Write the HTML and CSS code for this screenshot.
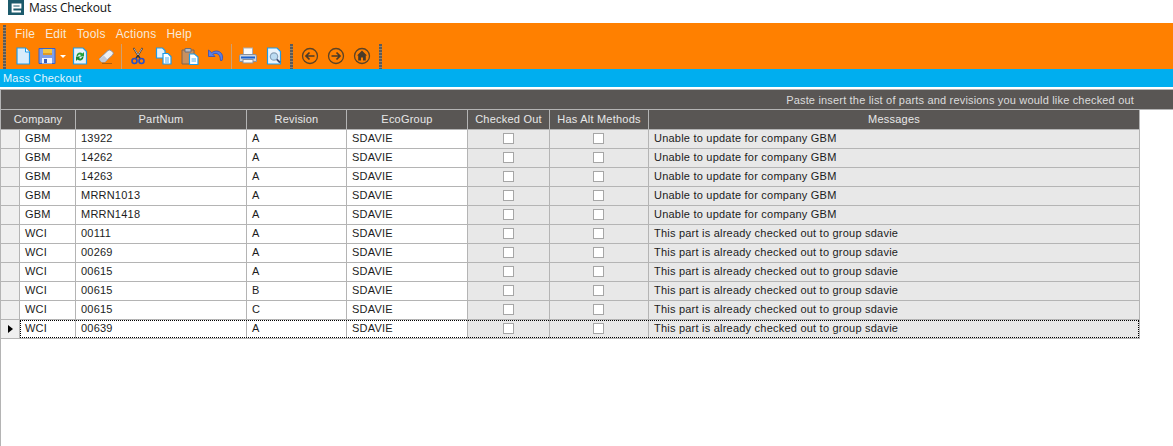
FILE: index.html
```html
<!DOCTYPE html>
<html lang="en">
<head>
<meta charset="utf-8">
<title>Mass Checkout</title>
<link rel="stylesheet" href="styles.css">
</head>
<body>
<header class="titlebar">
  <svg class="logo" viewBox="0 0 16 15" width="16" height="15"><rect width="16" height="15" fill="#1c5a6b"/><path d="M4 7.500h8.500V4.500H4.500V11.500H13" fill="none" stroke="#fff" stroke-width="1.800"/></svg>
  <span class="title">Mass Checkout</span>
</header>

<section class="ribbon">
  <div class="grip grip-tall"></div>
  <div class="ribbon-body">
    <nav class="menu">
      <span>File</span><span>Edit</span><span>Tools</span><span>Actions</span><span>Help</span>
    </nav>
    <div class="toolbar">
      <span class="btn"><svg viewBox="0 0 18 18" width="18" height="18"><path d="M3 1h8.500l4 4v12H3z" fill="#d8ecfb" stroke="#1e9be8" stroke-width="1.200"/><path d="M11.500 1v4h4" fill="#fff" stroke="#1e9be8"/></svg></span>
      <span class="btn btn-save"><svg viewBox="0 0 18 18" width="18" height="18"><path d="M1 1.500h16v15H1z" fill="#7f9fe8" stroke="#3a62c8"/><rect x="5" y="2" width="9" height="6" fill="#f4c63f"/><rect x="5" y="6" width="9" height="2" fill="#e09b28"/><rect x="4" y="11" width="10" height="5.500" fill="#f3f6fc"/><rect x="6" y="12" width="3" height="4" fill="#3a5fb8"/></svg></span>
      <span class="btn-arrow"><i class="caret"></i></span>
      <span class="btn"><svg viewBox="0 0 18 18" width="18" height="18"><path d="M2.500 1h9.500l3.500 3.500v12.500h-13z" fill="#e5f2fb" stroke="#1e9be8" stroke-width="1.200"/><path d="M5.500 9a3.500 3.500 0 0 1 6-2.500L13 5v4.500H8.500l1.500-1.500a1.800 1.800 0 0 0-3 1z" fill="#21a03c"/><path d="M12.500 10a3.500 3.500 0 0 1-6 2.500L5 14V9.500h4.500L8 11a1.800 1.800 0 0 0 3-1z" fill="#168a32"/></svg></span>
      <span class="btn"><svg viewBox="0 0 18 18" width="18" height="18"><path d="M2 12 11 3.500q1.500-1 3 0l2 2q.8 1.300-.5 2.500L8 15H4.500z" fill="#eef1f5" stroke="#8b93a3"/><path d="M2 12l2.500 3H8l2.500-2.500-3.500-3.800z" fill="#c4cad6"/><path d="M5 16.500h10" stroke="#7a4a12" stroke-opacity=".6"/></svg></span>
      <span class="sep"></span>
      <span class="btn"><svg viewBox="0 0 18 18" width="18" height="18"><path d="M4.500 1 11 11.500M13.500 1 7 11.500" stroke="#30323a" stroke-width="1.500" fill="none"/><path d="M5 1.500 9 8M13 1.500 9 8" stroke="#e6e8ee" stroke-width=".7"/><circle cx="5.500" cy="14" r="2.500" fill="none" stroke="#2a4fc4" stroke-width="1.600"/><circle cx="12.500" cy="14" r="2.500" fill="none" stroke="#2a4fc4" stroke-width="1.600"/></svg></span>
      <span class="btn"><svg viewBox="0 0 18 18" width="18" height="18"><path d="M1.500 1h6l2.500 2.500V11H1.500z" fill="#e5f2fb" stroke="#1e9be8" stroke-width="1.200"/><path d="M8 6.500h5l3 3v7.500H8z" fill="#fff" stroke="#1e9be8" stroke-width="1.200"/><path d="M10 11h4M10 13h4M10 15h4" stroke="#1e9be8" stroke-width=".8"/></svg></span>
      <span class="btn"><svg viewBox="0 0 18 18" width="18" height="18"><path d="M1 3h12v14H1z" fill="#c8905f" stroke="#7d6250"/><path d="M4 1.500h6V5H4z" fill="#b9bcc4" stroke="#6c6f78"/><path d="M8.500 7h5l3.500 3v7.500H8.500z" fill="#fff" stroke="#1e9be8" stroke-width="1.200"/><path d="M10.500 12h4.500M10.500 14h4.500" stroke="#1e9be8" stroke-width=".8"/></svg></span>
      <span class="btn"><svg viewBox="0 0 18 18" width="18" height="18"><path d="M1.500 3v6.500H8L5.800 7.300c2.700-1.800 6-.9 7.200 2.700l.5 3.500h1.500c2-5-1-9.500-5.500-9.500-2 0-3.500.7-4.800 1.700z" fill="#5f7fe0" stroke="#2c4fc0" stroke-width=".8"/></svg></span>
      <span class="sep"></span>
      <span class="btn"><svg viewBox="0 0 18 18" width="18" height="18"><rect x="4.500" y="1" width="9" height="7" fill="#fbfbfb" stroke="#a9adb5"/><path d="M2 7.500h14q1.500 0 1.500 1.500v5.500H.5V9q0-1.500 1.500-1.500z" fill="#cfd3da" stroke="#8b919b"/><rect x="2" y="9.500" width="14" height="2" fill="#1b62d0"/><rect x="4" y="12.500" width="10" height="3.500" fill="#f5f5f5" stroke="#8b919b"/></svg></span>
      <span class="btn"><svg viewBox="0 0 18 18" width="18" height="18"><path d="M2.500 1h9.500l3.500 3.500v12.500h-13z" fill="#eaf4fc" stroke="#1e9be8" stroke-width="1.200"/><circle cx="9" cy="9.500" r="3.700" fill="#bcdcf2" stroke="#8aa3ba" stroke-width="1.200"/><path d="M11.800 12.300l3.200 3.200" stroke="#3f4f7a" stroke-width="1.800"/></svg></span>
      <div class="grip grip-a"></div>
      <span class="btn"><svg viewBox="0 0 18 18" width="18" height="18"><circle cx="9" cy="9" r="7.500" fill="none" stroke="#5c4326" stroke-width="1.300"/><path d="M13.500 9h-8M8.500 5.500 5 9l3.500 3.500" fill="none" stroke="#4a3a28" stroke-width="1.700"/></svg></span>
      <span class="btn"><svg viewBox="0 0 18 18" width="18" height="18"><circle cx="9" cy="9" r="7.500" fill="none" stroke="#5c4326" stroke-width="1.300"/><path d="M4.500 9h8M9.500 5.500 13 9l-3.500 3.500" fill="none" stroke="#4a3a28" stroke-width="1.700"/></svg></span>
      <span class="btn"><svg viewBox="0 0 18 18" width="18" height="18"><circle cx="9" cy="9" r="7.500" fill="none" stroke="#5c4326" stroke-width="1.300"/><path d="M9 3.500 14 8.500h-1.200V13.500H10v-3H8v3H5.200V8.500H4z" fill="#4a3a28"/></svg></span>
      <div class="grip grip-b"></div>
    </div>
  </div>
</section>

<div class="formbar">Mass Checkout</div>

<main class="workspace">
  <div class="hint">Paste insert the list of parts and revisions you would like checked out</div>
  <div class="grid">
    <div class="row head">
      <div class="th th-company">Company</div>
      <div class="th">PartNum</div>
      <div class="th">Revision</div>
      <div class="th">EcoGroup</div>
      <div class="th">Checked Out</div>
      <div class="th">Has Alt Methods</div>
      <div class="th">Messages</div>
    </div>
    <div class="row"><div class="rh"></div><div class="cells"><div class="td">GBM</div><div class="td">13922</div><div class="td">A</div><div class="td">SDAVIE</div><div class="td ro"><i class="cb"></i></div><div class="td ro"><i class="cb"></i></div><div class="td ro msg">Unable to update for company GBM</div></div></div>
    <div class="row"><div class="rh"></div><div class="cells"><div class="td">GBM</div><div class="td">14262</div><div class="td">A</div><div class="td">SDAVIE</div><div class="td ro"><i class="cb"></i></div><div class="td ro"><i class="cb"></i></div><div class="td ro msg">Unable to update for company GBM</div></div></div>
    <div class="row"><div class="rh"></div><div class="cells"><div class="td">GBM</div><div class="td">14263</div><div class="td">A</div><div class="td">SDAVIE</div><div class="td ro"><i class="cb"></i></div><div class="td ro"><i class="cb"></i></div><div class="td ro msg">Unable to update for company GBM</div></div></div>
    <div class="row"><div class="rh"></div><div class="cells"><div class="td">GBM</div><div class="td">MRRN1013</div><div class="td">A</div><div class="td">SDAVIE</div><div class="td ro"><i class="cb"></i></div><div class="td ro"><i class="cb"></i></div><div class="td ro msg">Unable to update for company GBM</div></div></div>
    <div class="row"><div class="rh"></div><div class="cells"><div class="td">GBM</div><div class="td">MRRN1418</div><div class="td">A</div><div class="td">SDAVIE</div><div class="td ro"><i class="cb"></i></div><div class="td ro"><i class="cb"></i></div><div class="td ro msg">Unable to update for company GBM</div></div></div>
    <div class="row"><div class="rh"></div><div class="cells"><div class="td">WCI</div><div class="td">00111</div><div class="td">A</div><div class="td">SDAVIE</div><div class="td ro"><i class="cb"></i></div><div class="td ro"><i class="cb"></i></div><div class="td ro msg">This part is already checked out to group sdavie</div></div></div>
    <div class="row"><div class="rh"></div><div class="cells"><div class="td">WCI</div><div class="td">00269</div><div class="td">A</div><div class="td">SDAVIE</div><div class="td ro"><i class="cb"></i></div><div class="td ro"><i class="cb"></i></div><div class="td ro msg">This part is already checked out to group sdavie</div></div></div>
    <div class="row"><div class="rh"></div><div class="cells"><div class="td">WCI</div><div class="td">00615</div><div class="td">A</div><div class="td">SDAVIE</div><div class="td ro"><i class="cb"></i></div><div class="td ro"><i class="cb"></i></div><div class="td ro msg">This part is already checked out to group sdavie</div></div></div>
    <div class="row"><div class="rh"></div><div class="cells"><div class="td">WCI</div><div class="td">00615</div><div class="td">B</div><div class="td">SDAVIE</div><div class="td ro"><i class="cb"></i></div><div class="td ro"><i class="cb"></i></div><div class="td ro msg">This part is already checked out to group sdavie</div></div></div>
    <div class="row"><div class="rh"></div><div class="cells"><div class="td">WCI</div><div class="td">00615</div><div class="td">C</div><div class="td">SDAVIE</div><div class="td ro"><i class="cb"></i></div><div class="td ro"><i class="cb"></i></div><div class="td ro msg">This part is already checked out to group sdavie</div></div></div>
    <div class="row current"><div class="rh"><i class="pointer"></i></div><div class="cells"><div class="td">WCI</div><div class="td">00639</div><div class="td">A</div><div class="td">SDAVIE</div><div class="td ro"><i class="cb"></i></div><div class="td ro"><i class="cb"></i></div><div class="td ro msg">This part is already checked out to group sdavie</div></div></div>
  </div>
</main>
</body>
</html>
```

FILE: styles.css
```css
* { box-sizing: border-box; }

html, body {
  margin: 0;
  height: 100%;
  overflow: hidden;
  background: #fff;
}

body {
  display: flex;
  flex-direction: column;
  font-family: "Liberation Sans", Arial, sans-serif;
  font-size: 11px;
  color: #1c1c1c;
}

.titlebar {
  flex: none;
  height: 23px;
  display: flex;
  align-items: flex-start;
  padding-left: 8px;
  background: #fff;
}

.logo { flex: none; }

.title {
  margin-left: 5px;
  font-family: "Open Sans", "Noto Sans", sans-serif;
  font-size: 12px;
  line-height: 16px;
  letter-spacing: -.2px;
  color: #111;
}

.ribbon {
  flex: none;
  height: 46px;
  display: flex;
  padding-left: 3px;
  background: #ff8000;
}

.grip {
  flex: none;
  width: 3px;
  background: repeating-linear-gradient(to bottom, #5b5b5b 0 2px, #9a8468 2px 3px);
}

.grip-tall { height: 44px; margin-top: 2px; }

.ribbon-body { flex: 1; min-width: 0; }

.menu {
  height: 21px;
  display: flex;
  align-items: center;
  gap: 10px;
  padding-left: 9px;
  font-size: 12px;
  letter-spacing: .2px;
  color: #f7e9da;
}

.toolbar {
  height: 25px;
  display: flex;
  align-items: center;
  padding-left: 4px;
}

.btn {
  flex: none;
  width: 26px;
  height: 20px;
  padding-bottom: 1px;
  display: flex;
  align-items: center;
  justify-content: center;
}

.btn-save { width: 22px; }

.btn-arrow {
  flex: none;
  width: 9px;
  height: 20px;
  display: flex;
  align-items: center;
  justify-content: center;
}

.caret {
  width: 0;
  height: 0;
  border-left: 3px solid transparent;
  border-right: 3px solid transparent;
  border-top: 3px solid #fff;
}

.sep {
  flex: none;
  width: 1px;
  height: 25px;
  margin: 0 3px 0 2px;
  background: #d0a070;
}

.grip-a { height: 25px; margin: 0 4px 0 3px; }
.grip-b { height: 25px; margin-left: 4px; }

.formbar {
  flex: none;
  height: 18px;
  padding-left: 3px;
  background: #00aeef;
  color: #e6f6fd;
  font-size: 11px;
  line-height: 18px;
  letter-spacing: .2px;
}

.workspace {
  flex: 1;
  margin-top: 2px;
  border-left: 1px solid #b4b4b4;
  border-top: 1px solid #b4b4b4;
}

.hint {
  height: 20px;
  padding-right: 39px;
  background: #595654;
  border-bottom: 1px solid #b4b4b4;
  color: #dcdcdc;
  font-size: 11px;
  line-height: 20px;
  letter-spacing: .18px;
  text-align: right;
}

.grid {
  width: 1139px;
}

.row {
  display: flex;
  height: 19px;
}

.head {
  height: 20px;
  background: #595654;
  border-bottom: 1px solid #b4b4b4;
  border-right: 1px solid #b4b4b4;
}

.th {
  flex: none;
  height: 19px;
  border-right: 1px solid #b4b4b4;
  color: #e8e8e8;
  line-height: 19px;
  letter-spacing: .22px;
  text-align: center;
}

.th:last-child { border-right: 0; }

.th-company { width: 75px; }
.th:nth-child(2) { width: 171px; }
.th:nth-child(3) { width: 100px; }
.th:nth-child(4) { width: 121px; }
.th:nth-child(5) { width: 82px; }
.th:nth-child(6) { width: 99px; }
.th:nth-child(7) { width: 490px; }

.rh {
  flex: none;
  width: 19px;
  background: #efefef;
  border-right: 1px solid #b4b4b4;
  border-bottom: 1px solid #b4b4b4;
  display: flex;
  align-items: center;
  padding-left: 7px;
}

.pointer {
  width: 0;
  height: 0;
  border-top: 4.5px solid transparent;
  border-bottom: 4.5px solid transparent;
  border-left: 5px solid #000;
}

.cells {
  flex: none;
  width: 1120px;
  display: grid;
  grid-template-columns: 56px 171px 100px 121px 82px 99px 490px;
  border-right: 1px solid #b4b4b4;
}

.td {
  height: 19px;
  padding-left: 5px;
  background: #fff;
  border-right: 1px solid #b4b4b4;
  border-bottom: 1px solid #b4b4b4;
  line-height: 16px;
  letter-spacing: .22px;
  white-space: nowrap;
  overflow: hidden;
}

.td:last-child { border-right: 0; }

.ro {
  display: flex;
  align-items: center;
  justify-content: center;
  padding: 0 1px 1px 0;
  background: #e8e8e8;
}

.msg {
  display: block;
  padding-left: 5px;
}

.cb {
  width: 11px;
  height: 11px;
  background: #fff;
  border: 1px solid #a6a6a6;
}

.current .cells {
  position: relative;
}

.current .cells::after {
  content: "";
  position: absolute;
  inset: 0 0 1px 0;
  border: 1px dotted #000;
  pointer-events: none;
}
```
